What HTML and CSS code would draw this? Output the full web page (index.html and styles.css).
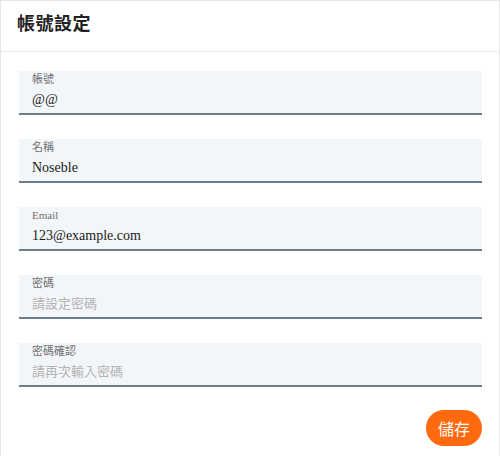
FILE: index.html
```html
<!DOCTYPE html>
<html lang="zh-Hant">
<head>
<meta charset="utf-8">
<title>帳號設定</title>
<link rel="stylesheet" href="styles.css">
</head>
<body>
<div class="card">
  <div class="card-header"><h1 class="title">帳號設定</h1></div>
  <form class="card-body">
    <label class="field">
      <span class="field-label">帳號</span>
      <input class="field-input" type="text" value="@@">
    </label>
    <label class="field">
      <span class="field-label">名稱</span>
      <input class="field-input" type="text" value="Noseble">
    </label>
    <label class="field">
      <span class="field-label">Email</span>
      <input class="field-input" type="text" value="123@example.com">
    </label>
    <label class="field">
      <span class="field-label">密碼</span>
      <input class="field-input" type="password" placeholder="請設定密碼">
    </label>
    <label class="field">
      <span class="field-label">密碼確認</span>
      <input class="field-input" type="password" placeholder="請再次輸入密碼">
    </label>
    <div class="actions">
      <button class="save-btn" type="button">儲存</button>
    </div>
  </form>
</div>
</body>
</html>
```
FILE: styles.css
```css
html, body {
  margin: 0;
  padding: 0;
  background: #ffffff;
}
body {
  font-family: "Liberation Serif", "Noto Sans CJK TC", serif;
}
.card {
  width: 500px;
  min-height: 470px;
  box-sizing: border-box;
  border: 1px solid #e6e6e6;
  border-bottom: none;
  background: #fff;
}
.card-header {
  height: 50px;
  border-bottom: 1px solid #e8e8e8;
  display: flex;
  align-items: center;
  padding-left: 16px;
}
.title {
  margin: 0;
  font-family: "Noto Sans CJK TC", sans-serif;
  font-size: 18px;
  font-weight: 700;
  color: #222;
  letter-spacing: 0.5px;
  position: relative;
  top: -4px;
}
.card-body {
  padding: 19px 17px 0 18px;
  display: flex;
  flex-direction: column;
  gap: 24px;
}
.field {
  display: flex;
  flex-direction: column;
  background: #f3f6f9;
  border-bottom: 2px solid #6e7c8a;
  padding: 0 12px 0 13px;
}
.field-label {
  font-size: 11px;
  line-height: 16px;
  height: 16px;
  color: #707070;
}
.field-input {
  border: none;
  outline: none;
  background: transparent;
  padding: 0;
  margin: 0;
  height: 26px;
  font-family: "Liberation Serif", "Noto Sans CJK TC", serif;
  font-size: 14px;
  color: #1a1a1a;
}
.field-input::placeholder {
  font-family: "Noto Sans CJK TC", sans-serif;
  color: #b3b3b3;
  font-size: 13px;
}
.actions {
  display: flex;
  justify-content: flex-end;
  margin-top: -1px;
}
.save-btn {
  width: 56px;
  height: 36px;
  border: none;
  border-radius: 18px;
  background: #ff6a0e;
  color: #fff;
  font-family: "Noto Sans CJK TC", sans-serif;
  font-size: 16px;
  padding: 0;
}
```
